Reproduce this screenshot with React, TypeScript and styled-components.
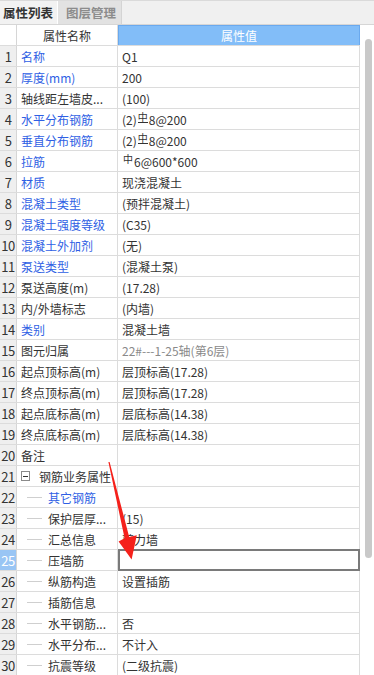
import React from "react";
import styled, { createGlobalStyle } from "styled-components";

const GlobalStyle = createGlobalStyle`
  html, body { margin: 0; padding: 0; background: #ffffff; }
  body { font-family: "Noto Sans CJK SC", "Noto Sans", sans-serif; overflow: hidden; }
  * { box-sizing: border-box; }
`;

const FONT = `"Noto Sans CJK SC", "Noto Sans", sans-serif`;

const Page = styled.div`
  position: relative;
  width: 374px;
  height: 675px;
  overflow: hidden;
  background: #ffffff;
  font-family: ${FONT};
`;

const TabBar = styled.div`
  display: flex;
  height: 25px;
  background: #f0f0f0;
  border-top: 1px solid #dadada;
  border-bottom: 1px solid #d6d6d6;
`;

const Tab = styled.div<{ $active?: boolean }>`
  display: flex;
  align-items: center;
  padding-right: 4px;
  font-size: 12.5px;
  font-weight: 700;
  color: ${(p) => (p.$active ? "#333333" : "#8c8c8c")};
  background: ${(p) => (p.$active ? "#f2f2f2" : "#e2e2e2")};
  border-right: 1px solid ${(p) => (p.$active ? "#ffffff" : "#d4d4d4")};
  width: ${(p) => (p.$active ? "58px" : "64px")};
  padding-left: ${(p) => (p.$active ? "3px" : "8px")};
`;

const Body = styled.div`
  display: flex;
`;

const Grid = styled.div`
  width: 360px;
  display: flex;
  flex-direction: column;
`;

const Row = styled.div`
  display: flex;
  height: 21px;
  border-bottom: 1px solid #dcdcdc;
`;

const NumCell = styled.div<{ $selected?: boolean; $header?: boolean }>`
  width: 17px;
  flex: none;
  display: flex;
  align-items: center;
  justify-content: center;
  font-size: 13px;
  color: ${(p) => (p.$selected ? "#ffffff" : "#333333")};
  background: ${(p) => (p.$header ? "#ffffff" : p.$selected ? "#99c5f4" : "#efefef")};
  border-right: 1px solid #d6d6d6;
  letter-spacing: -0.5px;
`;

const NameCell = styled.div<{ $blue?: boolean; $header?: boolean }>`
  width: 101px;
  flex: none;
  display: flex;
  align-items: center;
  justify-content: ${(p) => (p.$header ? "center" : "flex-start")};
  padding-left: ${(p) => (p.$header ? "0" : "4px")};
  font-size: 12px;
  white-space: nowrap;
  overflow: hidden;
  color: ${(p) => (p.$blue ? "#2f5fe4" : "#333333")};
  border-right: 1px solid #dcdcdc;
`;

const ValueCell = styled.div<{ $gray?: boolean; $editing?: boolean }>`
  width: 242px;
  flex: none;
  display: flex;
  align-items: center;
  padding-left: 4px;
  font-size: 12px;
  white-space: nowrap;
  overflow: hidden;
  color: ${(p) => (p.$gray ? "#8a8a8a" : "#333333")};
  border-right: 1px solid #dcdcdc;
  ${(p) =>
    p.$editing
      ? `border: 2px solid #7a7a7a; margin-bottom: -1px; margin-top: -1px; height: 22px;`
      : ""}
`;

const HeaderValue = styled.div`
  width: 242px;
  flex: none;
  display: flex;
  align-items: center;
  justify-content: center;
  font-size: 12px;
  color: #ffffff;
  background: #82bdf8;
  border: 1px solid #6aa9ee;
  border-bottom: none;
`;

const Connector = styled.span`
  display: inline-block;
  width: 15px;
  height: 1px;
  background: #cfcfcf;
  margin: 0 6px 0 6px;
  flex: none;
`;

const ToggleBox = styled.span`
  display: inline-flex;
  align-items: center;
  justify-content: center;
  width: 9px;
  height: 10px;
  border: 1px solid #8a8a8a;
  margin-right: 9px;
  flex: none;
  &::after {
    content: "";
    width: 5px;
    height: 1px;
    background: #333;
  }
`;

const Rebar = styled.span<{ $grade: 1 | 3 }>`
  display: inline-block;
  font-size: 10px;
  line-height: 10px;
  position: relative;
  top: -2px;
  margin: 0 1px 0 1px;
  ${(p) => (p.$grade === 3 ? "border-bottom: 1px solid #333;" : "")}
`;

const ScrollTrack = styled.div`
  width: 14px;
  padding-top: 14px;
  padding-left: 5px;
`;

const Thumb = styled.div`
  width: 7px;
  height: 519px;
  background: #c9c9c9;
  border-radius: 4px;
`;

const ArrowLayer = styled.svg`
  position: absolute;
  left: 0;
  top: 0;
  pointer-events: none;
`;

type R = {
  name: string;
  value?: React.ReactNode;
  blue?: boolean;
  gray?: boolean;
  child?: boolean;
  group?: boolean;
  selected?: boolean;
};

const rows: R[] = [
  { name: "名称", value: "Q1", blue: true },
  { name: "厚度(mm)", value: "200", blue: true },
  { name: "轴线距左墙皮...", value: "(100)" },
  { name: "水平分布钢筋", value: <>(2)<Rebar $grade={3}>中</Rebar>8@200</>, blue: true },
  { name: "垂直分布钢筋", value: <>(2)<Rebar $grade={3}>中</Rebar>8@200</>, blue: true },
  { name: "拉筋", value: <><Rebar $grade={1}>中</Rebar>6@600*600</>, blue: true },
  { name: "材质", value: "现浇混凝土", blue: true },
  { name: "混凝土类型", value: "(预拌混凝土)", blue: true },
  { name: "混凝土强度等级", value: "(C35)", blue: true },
  { name: "混凝土外加剂", value: "(无)", blue: true },
  { name: "泵送类型", value: "(混凝土泵)", blue: true },
  { name: "泵送高度(m)", value: "(17.28)" },
  { name: "内/外墙标志", value: "(内墙)" },
  { name: "类别", value: "混凝土墙", blue: true },
  { name: "图元归属", value: "22#---1-25轴(第6层)", gray: true },
  { name: "起点顶标高(m)", value: "层顶标高(17.28)" },
  { name: "终点顶标高(m)", value: "层顶标高(17.28)" },
  { name: "起点底标高(m)", value: "层底标高(14.38)" },
  { name: "终点底标高(m)", value: "层底标高(14.38)" },
  { name: "备注", value: "" },
  { name: "钢筋业务属性", group: true },
  { name: "其它钢筋", blue: true, child: true },
  { name: "保护层厚...", value: "(15)", child: true },
  { name: "汇总信息", value: "剪力墙", child: true },
  { name: "压墙筋", value: "", child: true, selected: true },
  { name: "纵筋构造", value: "设置插筋", child: true },
  { name: "插筋信息", value: "", child: true },
  { name: "水平钢筋...", value: "否", child: true },
  { name: "水平分布...", value: "不计入", child: true },
  { name: "抗震等级", value: "(二级抗震)", child: true },
];

export default function App() {
  return (
    <>
      <GlobalStyle />
      <Page>
        <TabBar>
          <Tab $active>属性列表</Tab>
          <Tab>图层管理</Tab>
        </TabBar>
        <Body>
          <Grid>
            <Row>
              <NumCell $header />
              <NameCell $header>属性名称</NameCell>
              <HeaderValue>属性值</HeaderValue>
            </Row>
            {rows.map((r, i) => (
              <Row key={i}>
                <NumCell $selected={r.selected}>{i + 1}</NumCell>
                <NameCell $blue={r.blue}>
                  {r.group && <ToggleBox />}
                  {r.child && <Connector />}
                  {r.name}
                </NameCell>
                <ValueCell $gray={r.gray} $editing={r.selected}>
                  {r.value}
                </ValueCell>
              </Row>
            ))}
          </Grid>
          <ScrollTrack>
            <Thumb />
          </ScrollTrack>
        </Body>
        <ArrowLayer width="374" height="675" viewBox="0 0 374 675">
          <polygon
            points="108.4,462 109.6,462 129.2,537 136.8,535.2 131.6,559.5 118.6,541.6 124.6,538.2"
            fill="#f5211b"
          />
        </ArrowLayer>
      </Page>
    </>
  );
}
